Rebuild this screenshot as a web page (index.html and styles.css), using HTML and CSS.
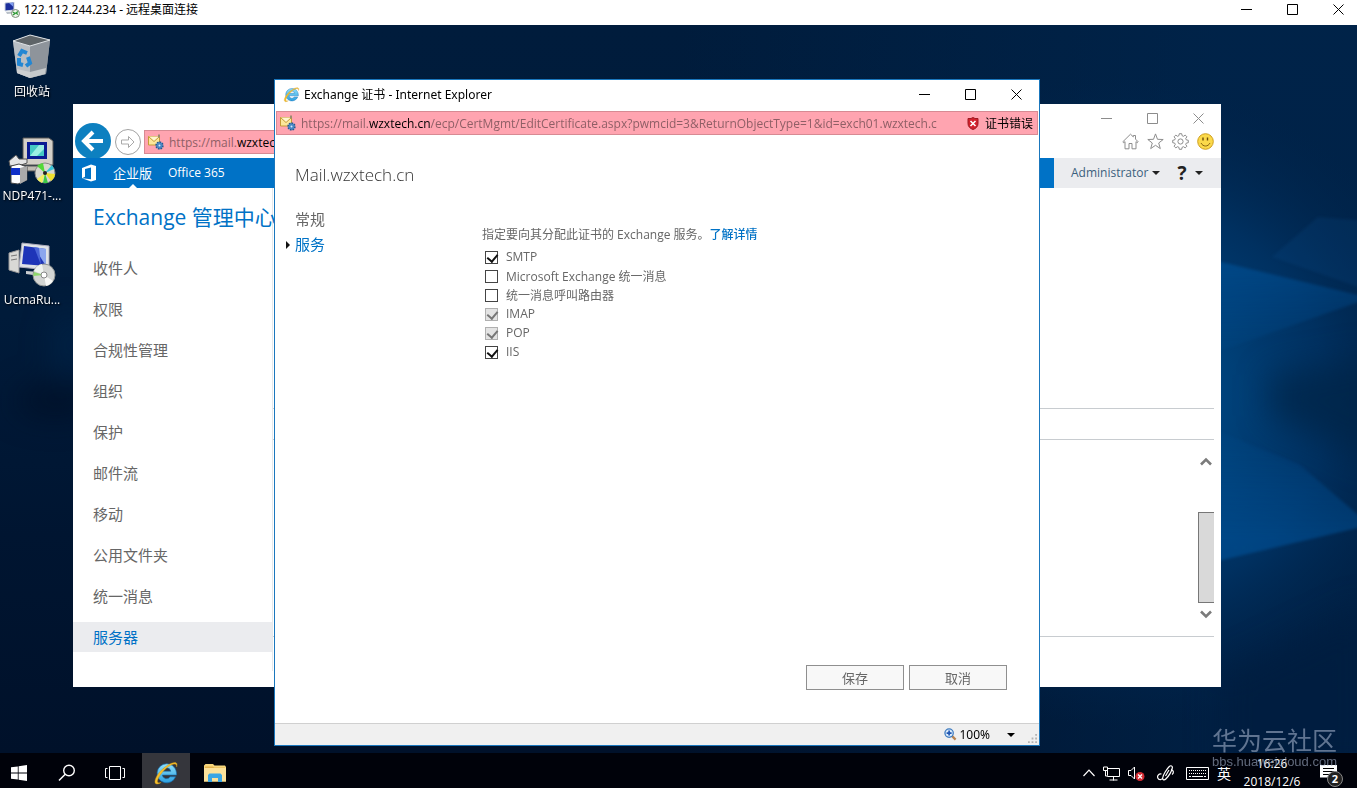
FILE: index.html
```html
<!DOCTYPE html>
<html lang="zh-CN">
<head>
    <meta charset="utf-8">
    <title>122.112.244.234 - 远程桌面连接</title>
    <link rel="stylesheet" href="styles.css">
</head>
<body>
    <!-- shared icons -->
    <svg class="defs" width="0" height="0">
        <defs>
            <linearGradient id="ie-blue" x1="0" y1="0" x2="0" y2="1">
                <stop offset="0" stop-color="#8fe0fb"/><stop offset="1" stop-color="#2a9fe0"/>
            </linearGradient>
        </defs>
        <symbol id="i-min" viewBox="0 0 11 11"><path d="M0 5.5h11" stroke="currentColor"/></symbol>
        <symbol id="i-max" viewBox="0 0 11 11"><path d="M.5.5h10v10H.5z" fill="none" stroke="currentColor"/></symbol>
        <symbol id="i-close" viewBox="0 0 11 11"><path d="M.5.5l10 10M10.5.5l-10 10" fill="none" stroke="currentColor"/></symbol>
        <symbol id="i-down" viewBox="0 0 8 4"><path d="M0 0h8L4 4z" fill="currentColor"/></symbol>
        <symbol id="i-ie" viewBox="0 0 24 24">
            <path d="M12.5 3.5a8.8 8.8 0 1 0 8.3 12h-5a4 4 0 0 1-7.3-1.6h13.2c.4-6-3.8-10.4-9.2-10.4zM8.6 10.3a4 4 0 0 1 7.8 0z" fill="url(#ie-blue)" stroke="#1671b5" stroke-width=".6"/>
            <path d="M21.8 6.5c1-2.6.3-4.3-1.8-4.2-4.6.2-12.6 6-16.3 12.2-2 3.5-2.6 6.7-.9 7.5 1.2.5 3-.2 4.7-1.3-1.5.5-2.8.6-3.2-.2-.7-1.4.9-5 4-8.8 3.7-4.4 8.6-7.9 11.4-8 1.6 0 2.3 1 2.1 2.8z" fill="#f5c02c" stroke="#c8901a" stroke-width=".4"/>
        </symbol>
        <symbol id="i-owa" viewBox="0 0 16 16">
            <path d="M.5 2.5h11v8.5H.5z" fill="#fce79a" stroke="#c59a35"/>
            <path d="M.5 2.5l5.5 5 5.5-5" fill="#fff6cf" stroke="#c59a35"/>
            <path d="M10 .5h2v3h-2z" fill="#9c8a70"/>
            <circle cx="11.5" cy="11.5" r="3.4" fill="#5f9fd8" stroke="#27588f" stroke-width="1.6" stroke-dasharray="1.6 1"/>
            <circle cx="11.5" cy="11.5" r="2.6" fill="#4784c3"/>
            <circle cx="11.5" cy="11.5" r="1" fill="#d7ebfa"/>
        </symbol>
    </svg>

    <header class="rdp-bar">
        <svg class="rdp-icon" viewBox="0 0 16 16">
            <path d="M1 1l9-1v8l-9 1z" fill="#1c2f9c" stroke="#cdd5df"/>
            <path d="M5 1l4-.5v4z" fill="#7f9df0"/>
            <path d="M2 10l7-.5v2L3 12z" fill="#b9c0c8"/>
            <circle cx="11.5" cy="11.5" r="4" fill="#eef3ea" stroke="#7d8c78"/>
            <path d="M9 10l2 1.5L9 13M14 9.5l-2 1.5 2 1.5" fill="none" stroke="#2d9a35" stroke-width="1.3"/>
        </svg>
        <span class="bar-title">122.112.244.234 - 远程桌面连接</span>
        <div class="win-controls">
            <button aria-label="最小化"><svg><use href="#i-min"/></svg></button>
            <button aria-label="最大化"><svg><use href="#i-max"/></svg></button>
            <button aria-label="关闭"><svg><use href="#i-close"/></svg></button>
        </div>
    </header>

    <main class="desktop">
        <svg class="wallpaper" viewBox="0 0 1357 728" preserveAspectRatio="none">
            <defs>
                <radialGradient id="glow" cx="1130" cy="375" r="330" gradientUnits="userSpaceOnUse">
                    <stop offset="0" stop-color="#00509a"/>
                    <stop offset=".3" stop-color="#004179"/>
                    <stop offset=".6" stop-color="#003263" stop-opacity=".9"/>
                    <stop offset="1" stop-color="#002248" stop-opacity="0"/>
                </radialGradient>
                <linearGradient id="base" x1="0" y1="0" x2="0" y2="1">
                    <stop offset="0" stop-color="#001c3c"/>
                    <stop offset=".4" stop-color="#001b3a"/>
                    <stop offset=".7" stop-color="#001531"/>
                    <stop offset="1" stop-color="#00112a"/>
                </linearGradient>
                <linearGradient id="right" x1="0" y1="0" x2="1" y2="0">
                    <stop offset=".5" stop-color="#00264e" stop-opacity="0"/>
                    <stop offset=".9" stop-color="#00264e" stop-opacity=".7"/>
                </linearGradient>
                <linearGradient id="beam-top" x1="0" y1="0" x2="0" y2="1">
                    <stop offset=".1" stop-color="#0062b4" stop-opacity=".4"/>
                    <stop offset="1" stop-color="#0062b4" stop-opacity="0"/>
                </linearGradient>
                <linearGradient id="beam-bottom" x1="0" y1="0" x2="0" y2="1">
                    <stop offset="0" stop-color="#0062b4" stop-opacity="0"/>
                    <stop offset=".8" stop-color="#0062b4" stop-opacity=".4"/>
                </linearGradient>
                <filter id="soft" x="-50%" y="-50%" width="200%" height="200%" color-interpolation-filters="sRGB"><feGaussianBlur stdDeviation="16"/></filter>
                <filter id="edge" x="-20%" y="-20%" width="140%" height="140%" color-interpolation-filters="sRGB"><feGaussianBlur stdDeviation="1.5"/></filter>
            </defs>
            <rect width="1357" height="728" fill="url(#base)"/>
            <rect width="1357" height="728" fill="url(#right)"/>
            <rect width="1357" height="728" fill="url(#glow)"/>
            <g filter="url(#soft)">
                <path d="M1270 350l110-20v110l-110-50z" fill="#002346" opacity=".7"/>
                <path d="M1220 650l150-70v170h-150z" fill="#001c3e" opacity=".7"/>
                <ellipse cx="55" cy="376" rx="40" ry="14" fill="#000b20" opacity=".7"/>
                <ellipse cx="70" cy="320" rx="16" ry="36" fill="#002a52" opacity=".5"/>
            </g>
            <g filter="url(#edge)">
                <path d="M1180 227L1370 273L1180 340z" fill="url(#beam-top)"/>
                <path d="M1180 390L1300 440L1370 500L1180 545z" fill="url(#beam-bottom)"/>
                <path d="M1272 232l46-40 52 4v70z" fill="#0a5a9c" opacity=".16"/>
            </g>
        </svg>

        <div class="shortcuts">
            <a class="shortcut" href="#">
                <svg viewBox="0 0 48 48">
                    <path d="M5 8l17-6 20 5-4 34-16 4-13-5z" fill="#9da3a9"/>
                    <path d="M5 8l17 5v32L9 40z" fill="#b9bec3"/>
                    <path d="M22 13l20-6-4 34-16 4z" fill="#8e949b"/>
                    <path d="M5 8l17-6 20 5-20 6z" fill="#5e6468" stroke="#dfe3e6"/>
                    <path d="M9 36l13 3 16-4-1 6-15 4-13-5z" fill="#d5d6d6" opacity=".8"/>
                    <g fill="none" stroke="#2387d3" stroke-width="4"><path d="M11 23l3-5 5 2M20 24l2 6-4 3M15 32l-4-1v-6"/></g>
                </svg>
                <span>回收站</span>
            </a>
            <a class="shortcut" href="#">
                <svg viewBox="0 0 48 48">
                    <path d="M15 1h26l4 3v24H15z" fill="#d4d0c8" stroke="#555"/>
                    <path d="M19 5h20v17H19z" fill="#0a1b93"/>
                    <path d="M22 8h14v11H22z" fill="#45c9c4"/><path d="M22 19l9-11h5v4l-7 7z" fill="#9aeee2"/>
                    <path d="M13 29h30l3 5H13z" fill="#c0bcb4" stroke="#555"/>
                    <path d="M1 24l7-6 3 4h8v4l-9 3H2z" fill="#e5e5e5" stroke="#555"/>
                    <path d="M3 29l8-2 8 3v13l-9 4-7-1z" fill="#fff" stroke="#444"/>
                    <path d="M3 31h9v7H3z" fill="#1030c8"/><path d="M12 31l7-2v14l-7 4z" fill="#aaa"/>
                    <circle cx="37" cy="36" r="10" fill="#d8d8d0" stroke="#888"/>
                    <path d="M37 36L29 29a10 10 0 0 1 6-3z" fill="#52d83a"/><path d="M37 36l10 1a10 10 0 0 1-4 7z" fill="#f0e02c"/>
                    <path d="M37 36l-3 10a10 10 0 0 1-5-4z" fill="#f2f060"/><path d="M37 36l7-8 2 4z" fill="#38c4d8"/><path d="M37 36l3 10-5 0z" fill="#3cc847"/>
                    <circle cx="37" cy="36" r="2" fill="#222"/>
                </svg>
                <span>NDP471-...</span>
            </a>
            <a class="shortcut" href="#">
                <svg viewBox="0 0 48 48">
                    <path d="M1 12l10-3v23l-10-3z" fill="#d9d9d6" stroke="#999"/><path d="M3 15l6-1M3 19l6-1" stroke="#777"/>
                    <path d="M14 2l27 3v24l-30-3z" fill="#dfe3e6" stroke="#aab"/>
                    <path d="M16 5l22 3v17l-24-2z" fill="#1e35b8"/><path d="M26 6l12 2v17z" fill="#8ba6ee"/><path d="M26 6l5 1 2 17z" fill="#4965d6"/>
                    <path d="M18 30l14 1v4l-14-2z" fill="#c9cccf"/>
                    <circle cx="36" cy="34" r="11" fill="#d3d5d3" stroke="#8e9290"/>
                    <path d="M36 34L26 30a11 11 0 0 1 8-7z" fill="#eff3ef"/><path d="M36 34l9 6a11 11 0 0 1-7 5z" fill="#f8f8f6"/><path d="M36 34l-10-3-1 4z" fill="#8ed66c"/>
                    <circle cx="36" cy="34" r="3" fill="#fff" stroke="#888"/>
                </svg>
                <span>UcmaRu...</span>
            </a>
        </div>

        <!-- main browser window -->
        <section class="window admin">
            <div class="chrome">
                <button class="go-back" aria-label="后退"><svg viewBox="0 0 36 36"><circle cx="18" cy="18" r="18" fill="#0d80c0"/><path d="M28 18H10M18 9l-9 9 9 9" fill="none" stroke="#fff" stroke-width="4"/></svg></button>
                <button class="go-forward" aria-label="前进"><svg viewBox="0 0 26 26"><circle cx="13" cy="13" r="12.5" fill="#fff" stroke="#a2a2a2"/><path d="M6.5 11h7V7.5L19 13l-5.5 5.5V15h-7z" fill="none" stroke="#a9a9a9"/></svg></button>
                <div class="address admin-address">
                    <svg class="owa"><use href="#i-owa"/></svg>
                    <span class="url">https://mail.<b>wzxtech.cn</b>/ecp/</span>
                </div>
                <div class="chrome-right">
                    <div class="win-controls faded">
                        <button aria-label="最小化"><svg><use href="#i-min"/></svg></button>
                        <button aria-label="最大化"><svg><use href="#i-max"/></svg></button>
                        <button aria-label="关闭"><svg><use href="#i-close"/></svg></button>
                    </div>
                    <div class="tools">
                        <svg viewBox="0 0 17 17"><path d="M.8 8.8L8.5 1.2l2.8 2.7V2.5h2.2v3.6l2.7 2.7-1 .9-1.2-1.1v7.2H10v-5.3H7v5.3H3V8.6L1.8 9.7z" fill="none" stroke="#8d8d8d"/></svg>
                        <svg viewBox="0 0 17 17"><path d="M8.5.9l2 5.4 5.7.2-4.5 3.5 1.6 5.6-4.8-3.3-4.8 3.3L5.3 10 .8 6.5l5.7-.2z" fill="none" stroke="#8d8d8d"/></svg>
                        <svg viewBox="0 0 17 17"><path d="M7.3.7h2.4l.4 2 1.4.6 1.7-1.2 1.7 1.7-1.2 1.7.6 1.4 2 .4v2.4l-2 .4-.6 1.4 1.2 1.7-1.7 1.7-1.7-1.2-1.4.6-.4 2H7.3l-.4-2-1.4-.6-1.7 1.2-1.7-1.7 1.2-1.7-.6-1.4-2-.4V7.3l2-.4.6-1.4-1.2-1.7 1.7-1.7 1.7 1.2 1.4-.6z" fill="none" stroke="#8d8d8d"/><circle cx="8.5" cy="8.5" r="2.6" fill="none" stroke="#8d8d8d"/></svg>
                        <svg viewBox="0 0 17 17"><circle cx="8.5" cy="8.5" r="7.8" fill="#fbd94a" stroke="#cf9f1e"/><path d="M6 4.5v3M10.5 4.5v3" stroke="#6b4b0a" stroke-width="1.4"/><path d="M4 10c2 4 7 4 9 0" fill="none" stroke="#8a6510"/></svg>
                    </div>
                </div>
            </div>

            <nav class="suite-bar">
                <svg class="office" viewBox="0 0 16 18"><path d="M1 4l9-3.5 5 1.4v14L10 17.5 1 14.2l9 1V3.5L4 5v7.8l-3 1.4z" fill="#fff"/></svg>
                <a class="suite-link current" href="#">企业版</a>
                <a class="suite-link" href="#">Office 365</a>
                <div class="account">
                    <button class="user">Administrator <svg><use href="#i-down"/></svg></button>
                    <button class="help"><b>?</b> <svg><use href="#i-down"/></svg></button>
                </div>
            </nav>

            <div class="admin-body">
                <aside class="sidebar">
                    <h1>Exchange 管理中心</h1>
                    <ul>
                        <li><a href="#">收件人</a></li>
                        <li><a href="#">权限</a></li>
                        <li><a href="#">合规性管理</a></li>
                        <li><a href="#">组织</a></li>
                        <li><a href="#">保护</a></li>
                        <li><a href="#">邮件流</a></li>
                        <li><a href="#">移动</a></li>
                        <li><a href="#">公用文件夹</a></li>
                        <li><a href="#">统一消息</a></li>
                        <li class="selected"><a href="#">服务器</a></li>
                    </ul>
                </aside>
                <div class="content">
                    <div class="row-head"></div>
                    <div class="details">
                        <div class="scrollbar">
                            <svg viewBox="0 0 12 9"><path d="M1 7.5l5-5 5 5" fill="none" stroke="#7b7b7b" stroke-width="2.6"/></svg>
                            <div class="thumb"></div>
                            <svg viewBox="0 0 12 9"><path d="M1 1.5l5 5 5-5" fill="none" stroke="#7b7b7b" stroke-width="2.6"/></svg>
                        </div>
                    </div>
                </div>
            </div>
        </section>

        <!-- certificate dialog -->
        <section class="window dialog">
            <header class="dialog-title">
                <svg class="ie"><use href="#i-ie"/></svg>
                <span class="bar-title">Exchange 证书 - Internet Explorer</span>
                <div class="win-controls">
                    <button aria-label="最小化"><svg><use href="#i-min"/></svg></button>
                    <button aria-label="最大化"><svg><use href="#i-max"/></svg></button>
                    <button aria-label="关闭"><svg><use href="#i-close"/></svg></button>
                </div>
            </header>
            <div class="address">
                <svg class="owa"><use href="#i-owa"/></svg>
                <span class="url">https://mail.<b>wzxtech.cn</b>/ecp/CertMgmt/EditCertificate.aspx?pwmcid=3&amp;ReturnObjectType=1&amp;id=exch01.wzxtech.c</span>
                <svg class="shield" viewBox="0 0 12 13"><path d="M6 .5l2 1h3v5c0 3-2 5-5 6-3-1-5-3-5-6v-5h3z" fill="#d3202c" stroke="#9d1a22"/><path d="M3.5 4l5 5M8.5 4l-5 5" stroke="#fff" stroke-width="1.6"/></svg>
                <span class="cert-error">证书错误</span>
            </div>
            <form class="cert">
                <h2>Mail.wzxtech.cn</h2>
                <div class="cert-columns">
                    <ul class="tabs">
                        <li><a href="#">常规</a></li>
                        <li class="selected"><a href="#">服务</a></li>
                    </ul>
                    <div class="services">
                        <p>指定要向其分配此证书的 Exchange 服务。<a href="#">了解详情</a></p>
                        <label><input type="checkbox" checked>SMTP</label>
                        <label><input type="checkbox">Microsoft Exchange 统一消息</label>
                        <label><input type="checkbox">统一消息呼叫路由器</label>
                        <label><input type="checkbox" checked disabled>IMAP</label>
                        <label><input type="checkbox" checked disabled>POP</label>
                        <label><input type="checkbox" checked>IIS</label>
                    </div>
                </div>
                <div class="actions">
                    <button type="button">保存</button>
                    <button type="button">取消</button>
                </div>
            </form>
            <footer class="status-bar">
                <svg class="zoom" viewBox="0 0 14 14"><path d="M8.5 8.5l4 4" stroke="#b98450" stroke-width="2.4"/><circle cx="5.5" cy="5.5" r="4.5" fill="#dcecfb" stroke="#3f7cc0" stroke-width="1.4"/><path d="M5.5 2.8v5.4M2.8 5.5h5.4" stroke="#1f56b3" stroke-width="1.8"/></svg>
                <span class="bar-title">100%</span>
                <svg class="caret"><use href="#i-down"/></svg>
                <svg class="grip" viewBox="0 0 10 10"><path d="M8 0h2v2H8zM4 4h2v2H4zM8 4h2v2H8zM0 8h2v2H0zM4 8h2v2H4zM8 8h2v2H8z" fill="#b4b4b4"/></svg>
            </footer>
        </section>
    </main>

    <footer class="taskbar">
        <button class="start" aria-label="开始"><svg viewBox="0 0 16 16"><path d="M0 2.3L6.8 1.4v6.2H0zM7.6 1.3L16 0v7.6H7.6zM0 8.4h6.8v6.2L0 13.7zM7.6 8.4H16V16l-8.4-1.3z" fill="#fff"/></svg></button>
        <button aria-label="搜索"><svg viewBox="0 0 18 18"><circle cx="11" cy="6.5" r="5.3" fill="none" stroke="#fff" stroke-width="1.4"/><path d="M7.2 10.3L1 16.5" stroke="#fff" stroke-width="1.5"/></svg></button>
        <button aria-label="任务视图"><svg class="wide" viewBox="0 0 20 14"><path d="M4.5.5h11v13h-11zM2.5 2.5h-2v9h2M17.5 2.5h2v9h-2" fill="none" stroke="#fff"/></svg></button>
        <button class="running" aria-label="Internet Explorer"><svg class="ie-large"><use href="#i-ie"/></svg></button>
        <button aria-label="文件资源管理器"><svg class="folder" viewBox="0 0 22 18"><path d="M0 1.5L1.5 0H9l1.500 1.500H21L22 3v14.500H0z" fill="#f6d67c"/><path d="M1 2.5h8l1 1h11V5H1z" fill="#e3b24c"/><path d="M0 4h22v13.5H0z" fill="#fbe19a"/><path d="M4 18v-7l1.5-1.5h11L18 11v7h-4v-4H8v4z" fill="#39a5e4"/></svg></button>

        <div class="tray">
            <svg class="t-up" viewBox="0 0 12 8"><path d="M.5 7L6 1.2 11.5 7" fill="none" stroke="#fff" stroke-width="1.2"/></svg>
            <svg class="t-net" viewBox="0 0 17 15"><path d="M4.5 2.5h12v8h-12zM10.5 10.5v4M6.5 14h8" fill="none" stroke="#fff"/><path d="M.5 1h4v3.5h-4zM2.5 4.5V10h2" fill="#000" stroke="#fff"/></svg>
            <svg class="t-vol" viewBox="0 0 17 15"><path d="M.5 4.5H3L6.5 1v12L3 9.5H.5z" fill="none" stroke="#fff"/><circle cx="12" cy="10.5" r="4.5" fill="#d42b33"/><path d="M10 8.5l4 4M14 8.5l-4 4" stroke="#fff" stroke-width="1.2"/></svg>
            <svg class="t-pen" viewBox="0 0 18 17"><path d="M4.5 9C1.5 8.5 0 11 .8 13c1 2.5 4.5 2 5-.5.5-3 4-8.5 6.5-11 1.5-1.5 3.5-.5 3 1.5-.7 3-3.5 8-6.5 11-1.5 1.5-3.5 1-3-1" fill="none" stroke="#fff" stroke-width="1.2"/><path d="M14 4.500c3 1 3 3.500 1 5M8.500 11l3.500-6" fill="none" stroke="#fff" stroke-width="1.2"/></svg>
            <svg class="t-kbd" viewBox="0 0 23 13"><path d="M.5.5h22v12H.5z" fill="none" stroke="#fff"/><path d="M3 3.5h17M3 6.5h17" stroke="#fff" stroke-dasharray="1 1"/><path d="M3 9.5h2M6 9.5h11M18 9.5h2" stroke="#fff"/></svg>
            <span class="ime">英</span>
            <time class="clock"><span>16:26</span><span>2018/12/6</span></time>
            <div class="notify">
                <svg viewBox="0 0 17 16"><path d="M0 0h17v12.5h-5V16l-4-3.5H0z" fill="#fff"/><path d="M3 3.5h11M3 6.5h11M3 9.5h8" stroke="#000"/></svg>
                <span class="badge">2</span>
            </div>
        </div>
    </footer>

    <div class="watermark">
        <span>华为云社区</span>
        <small>bbs.huaweicloud.com</small>
    </div>
</body>
</html>
```
FILE: styles.css
```css
* { box-sizing: border-box; }
body {
    margin: 0;
    height: 100vh;
    display: flex;
    flex-direction: column;
    overflow: hidden;
    position: relative;
    font-family: "Open Sans", "Noto Sans CJK SC", sans-serif;
    font-size: 12px;
    color: #000;
}
button { font: inherit; color: inherit; background: none; border: none; padding: 0; cursor: pointer; }
a { color: inherit; text-decoration: none; }
ul { list-style: none; margin: 0; padding: 0; }
svg { display: block; flex: none; }
.defs { position: absolute; }
.bar-title { font-family: "Noto Sans", "Noto Sans CJK SC", sans-serif; line-height: 16px; }

/* window buttons */
.win-controls { display: flex; margin-left: auto; }
.win-controls button { width: 46px; height: 28px; display: flex; align-items: center; justify-content: center; }
.win-controls svg { width: 11px; height: 11px; }
.faded { color: #8c8c8c; }

/* remote desktop bar */
.rdp-bar { height: 25px; flex: none; display: flex; align-items: center; padding: 0 0 6px 4px; background: #fff; }
.rdp-icon { width: 16px; height: 16px; margin-right: 4px; }
.rdp-bar .win-controls { margin-right: -4px; }
.rdp-bar .win-controls button { height: 18px; }

/* desktop */
.desktop { flex: 1; position: relative; overflow: hidden; background: #001a38; }
.wallpaper { position: absolute; inset: 0; width: 100%; height: 100%; }
.shortcuts { position: relative; width: 64px; display: flex; flex-direction: column; gap: 30px; padding-top: 8px; }
.shortcut { height: 74px; display: flex; flex-direction: column; align-items: center; color: #fff; text-shadow: 1px 1px 2px #000; }
.shortcut svg { width: 48px; height: 48px; }
.shortcut span { line-height: 22px; white-space: nowrap; }
.window { position: absolute; display: flex; flex-direction: column; background: #fff; overflow: hidden; }

/* admin window */
.admin { left: 73px; right: 136px; top: 79px; bottom: 66px; }
.chrome { height: 54px; flex: none; display: flex; align-items: flex-end; overflow: hidden; padding-left: 2px; }
.go-back { height: 35px; }
.go-back svg { width: 36px; height: 36px; }
.go-forward { margin: 0 3px 3px 4px; }
.go-forward svg { width: 26px; height: 26px; }
.chrome-right { align-self: stretch; width: 200px; display: flex; flex-direction: column; }
.tools { display: flex; gap: 8px; justify-content: flex-end; padding: 1px 7px 0 0; }
.tools svg { width: 17px; height: 17px; }
.address { display: flex; align-items: center; height: 24px; flex: none; margin: 0 1px; padding: 0 4px 0 3px; background: #ffa4b0; border: 1px solid #d78a93; font-size: 12px; }
.admin-address { flex: 1; margin: 0 0 4px; }
.owa { width: 16px; height: 16px; margin-right: 5px; }
.url { flex: 1; color: #8f5f66; white-space: nowrap; overflow: hidden; }
.url b { font-weight: normal; color: #000; }

.suite-bar { height: 30px; flex: none; display: flex; align-items: stretch; background: #0072c6; color: #fff; line-height: 30px; }
.office { width: 16px; height: 18px; margin: 6px 16px 0 8px; }
.suite-link { position: relative; margin-right: 16px; }
.current { font-size: 13px; }
.current::after { content: ""; position: absolute; left: 50%; bottom: 0; margin-left: -4px; border: 4px solid transparent; border-top: 0; border-bottom-color: #fff; }
.account { margin-left: auto; width: 167px; display: flex; padding-left: 17px; background: #ebecef; color: #3b5f7d; }
.account button { display: flex; align-items: center; }
.account svg { width: 8px; height: 4px; margin-left: 8px; color: #222; }
.account .user svg { margin-left: 4px; }
.help { margin-left: 17px; }
.help b { color: #222; font-size: 19px; }

.admin-body { flex: 1; display: flex; }
.sidebar { width: 200px; flex: none; margin-bottom: 16px; border-right: 1px solid #e6e8ea; }
.sidebar h1 { margin: 0; padding: 14px 0 21px 20px; font-size: 21px; line-height: 30px; font-weight: 400; color: #0072c6; white-space: nowrap; }
.sidebar li { height: 30px; margin-bottom: 11px; padding-left: 20px; font-size: 15px; line-height: 30px; color: #666; }
.sidebar .selected { background: #ebecef; color: #0072c6; }
.content { flex: 1; display: flex; flex-direction: column; padding: 220px 7px 50px 0; }
.row-head { height: 32px; border-top: 1px solid #c8ccd0; border-bottom: 1px solid #c8ccd0; }
.details { flex: 1; display: flex; justify-content: flex-end; padding: 16px 0; border-bottom: 1px solid #c8ccd0; }
.scrollbar { width: 16px; display: flex; flex-direction: column; justify-content: space-between; }
.scrollbar svg { width: 12px; height: 9px; margin: 1px 2px; }
.thumb { height: 91px; margin-top: 38px; background: #d9d9d9; border: 1px solid #777; border-right: 0; }

/* certificate dialog */
.dialog { left: 274px; right: 317px; top: 54px; bottom: 7px; border: 1px solid #1a77bd; }
.dialog-title { height: 31px; flex: none; display: flex; align-items: center; padding: 0 0 2px 8px; }
.ie { width: 17px; height: 17px; margin-right: 4px; }
.shield { width: 12px; height: 13px; margin: 0 6px 0 8px; }
.cert { flex: 1; display: flex; flex-direction: column; padding: 26px 32px 33px 7px; color: #666; }
.cert h2 { margin: 0 0 18px; padding-left: 13px; font-size: 17px; line-height: 28px; font-weight: 300; color: #333; }
.cert-columns { flex: 1; display: flex; }
.tabs { width: 200px; font-size: 15px; line-height: 25px; }
.tabs li { display: flex; align-items: center; padding-left: 13px; }
.tabs .selected { padding-left: 4px; color: #0072c6; }
.tabs .selected::before { content: ""; margin-right: 5px; border: 4px solid transparent; border-left-color: #111; border-right: 0; }
.services { padding-top: 18px; font-size: 12px; }
.services p { margin: 0 0 2px; line-height: 20px; }
.services p a { color: #0072c6; font-weight: 500; }
.services label { display: flex; align-items: center; height: 19px; padding-left: 3px; }
.services input { appearance: none; position: relative; width: 13px; height: 13px; margin: 1px 8px 0 0; border: 1px solid #444; background: #fff; }
.services input:checked::after { content: ""; position: absolute; left: 3px; top: 0; width: 5px; height: 8px; border: solid #111; border-width: 0 2px 2px 0; transform: rotate(40deg); }
.services input:disabled { border-color: #b0b0b0; background: #e4e4e4; }
.services input:disabled::after { border-color: #777; }
.actions { display: flex; justify-content: flex-end; gap: 5px; }
.actions button { width: 98px; height: 25px; border: 1px solid #8f8f8f; background: #f8f8f8; font-size: 13px; line-height: 20px; }
.status-bar { height: 22px; flex: none; display: flex; align-items: center; justify-content: flex-end; padding-right: 2px; background: #f0f0f0; border-top: 1px solid #d0d0d0; }
.zoom { width: 13px; height: 13px; margin-right: 2px; }
.caret { width: 8px; height: 4px; margin: 0 13px 0 17px; }
.grip { width: 9px; height: 9px; align-self: flex-end; margin-bottom: 2px; }

/* taskbar */
.taskbar { height: 35px; flex: none; display: flex; padding-right: 1px; background: #00020a; color: #fff; position: relative; }
.taskbar button { width: 48px; height: 40px; display: flex; align-items: center; justify-content: center; }
.taskbar button svg { width: 18px; height: 18px; }
.taskbar .start { width: 43px; padding-right: 5px; }
.taskbar .start svg { width: 16px; height: 16px; }
.taskbar .wide { width: 20px; height: 14px; }
.taskbar .running { margin: 0 1px 0 3px; background: #35363c; }
.taskbar .ie-large { width: 26px; height: 26px; }
.taskbar .folder { width: 22px; height: 18px; }
.tray { margin-left: auto; height: 40px; display: flex; align-items: center; gap: 8px; }
.t-up { width: 12px; height: 8px; }
.t-net { width: 17px; height: 15px; }
.t-vol { width: 17px; height: 15px; }
.t-pen { width: 18px; height: 17px; margin-left: 4px; }
.t-kbd { width: 23px; height: 13px; margin-left: 3px; }
.ime { font-size: 14px; }
.clock { width: 62px; margin-left: 2px; display: flex; flex-direction: column; align-items: center; line-height: 18px; }
.notify { position: relative; width: 36px; margin-left: 9px; }
.notify svg { width: 17px; height: 16px; }
.badge { position: absolute; left: 7px; top: 6px; width: 16px; height: 16px; border: 1px solid #888; border-radius: 50%; background: #222; font-size: 11px; font-weight: bold; line-height: 14px; text-align: center; }

.watermark { position: absolute; right: 20px; bottom: 19px; display: flex; flex-direction: column; align-items: flex-end; color: rgba(160, 175, 200, .6); pointer-events: none; }
.watermark span { font-size: 25px; line-height: 30px; }
.watermark small { font: 13px/14px "Liberation Sans", Arial, sans-serif; }
```
